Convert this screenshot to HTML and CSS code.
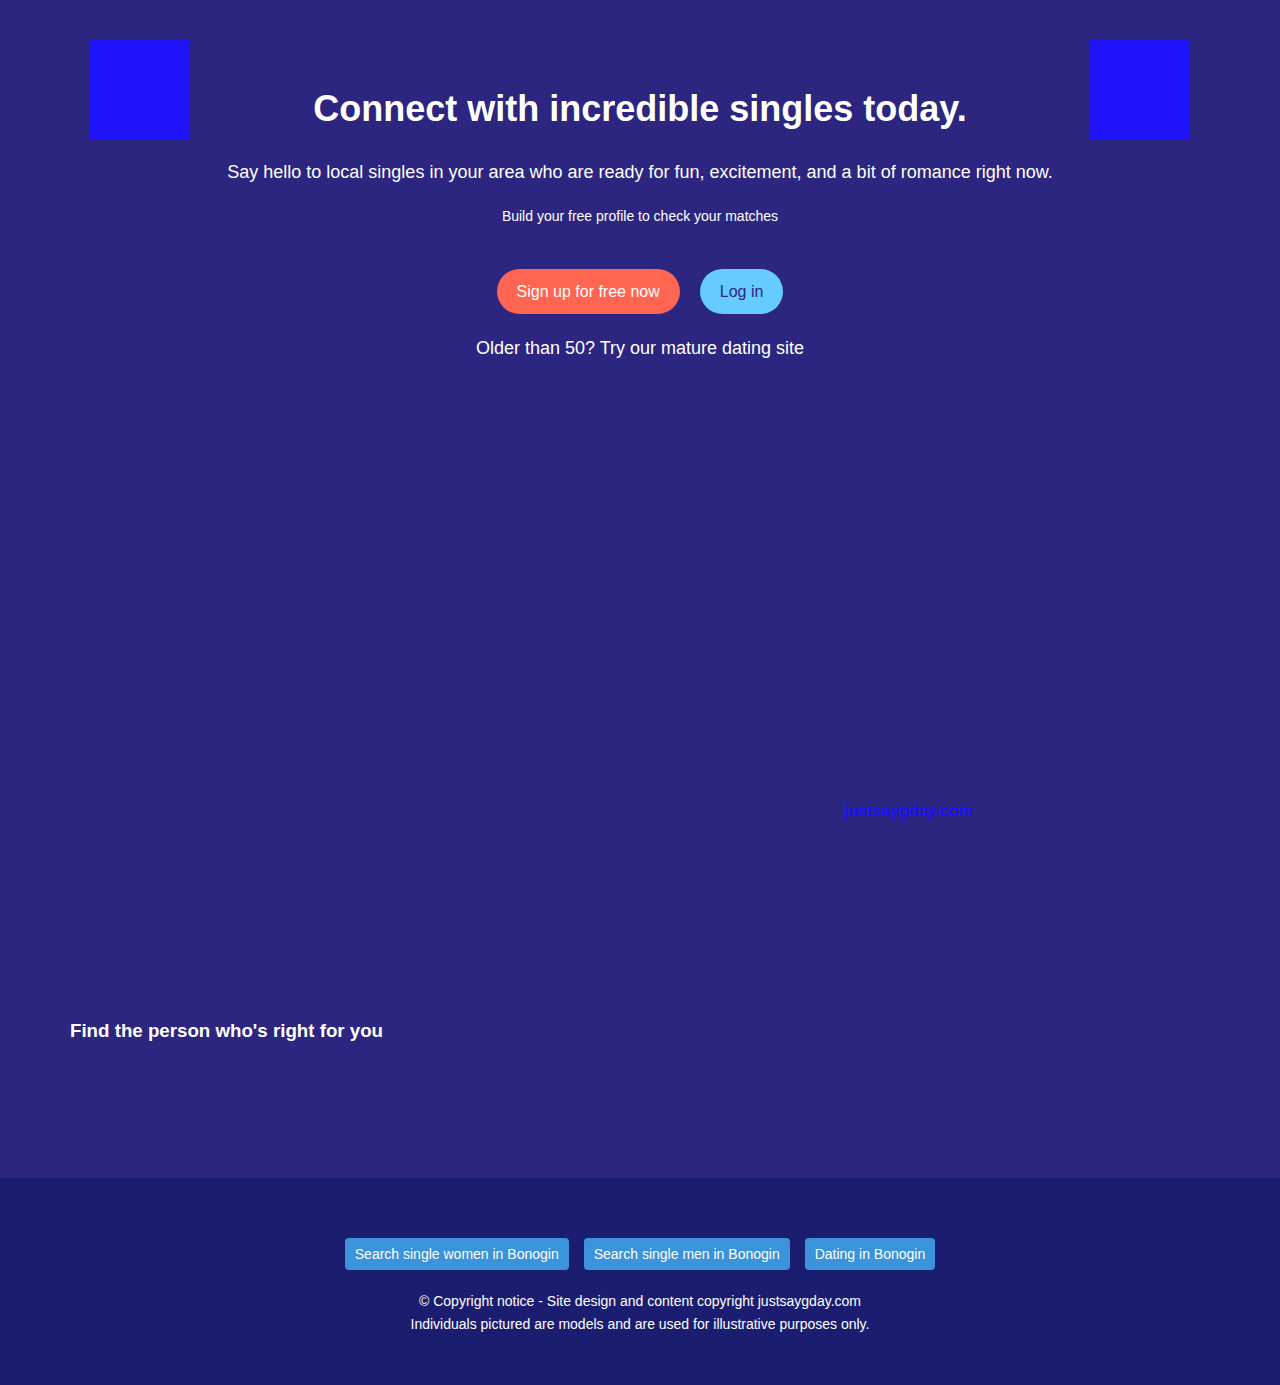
FILE: index.html
```html
<!DOCTYPE html>
<html lang="en">
<head>
<meta charset="utf-8">
<title>justsaygday.com</title>
<link rel="stylesheet" href="styles.css">
</head>
<body>
<main class="page">
  <section class="hero">
    <div class="square"></div>
    <div class="hero-body">
      <h1 class="title">Connect with incredible singles today.</h1>
      <p class="lead">Say hello to local singles in your area who are ready for fun, excitement, and a bit of romance right now.</p>
      <p class="small">Build your free profile to check your matches</p>
      <div class="actions">
        <a class="btn btn-signup" href="#">Sign up for free now</a>
        <a class="btn btn-login" href="#">Log in</a>
      </div>
      <p class="mature">Older than 50? Try our mature dating site</p>
    </div>
    <div class="square"></div>
  </section>
  <section class="showcase">
    <div class="showcase-media"></div>
    <a class="site-link" href="#">justsaygday.com</a>
  </section>
  <section class="find">
    <h3 class="find-title">Find the person who's right for you</h3>
  </section>
</main>
<footer class="footer">
  <nav class="footer-links">
    <a class="tag" href="#">Search single women in Bonogin</a>
    <a class="tag" href="#">Search single men in Bonogin</a>
    <a class="tag" href="#">Dating in Bonogin</a>
  </nav>
  <p class="copy">© Copyright notice - Site design and content copyright justsaygday.com<br>Individuals pictured are models and are used for illustrative purposes only.</p>
</footer>
</body>
</html>
```
FILE: styles.css
```css
* { box-sizing: border-box; }
html, body { margin: 0; padding: 0; }
body {
  background: #2c2680;
  color: #ffffff;
  font-family: "Liberation Sans", Arial, sans-serif;
}
.page {
  height: 1178px;
  background: #2c2680;
}
.hero {
  display: grid;
  grid-template-columns: 100px 1fr 100px;
  padding: 40px 90px 0;
}
.square {
  width: 100px;
  height: 100px;
  background: #1e13fa;
}
.hero-body {
  text-align: center;
  padding-top: 46px;
}
.title {
  margin: 0;
  font-size: 36px;
  line-height: 46px;
  font-weight: 700;
}
.lead {
  margin: 29px -60px 0;
  font-size: 18px;
  line-height: 22px;
}
.small {
  margin: 25px 0 0;
  font-size: 14px;
  line-height: 17px;
}
.actions {
  display: flex;
  justify-content: center;
  gap: 20px;
  margin-top: 44px;
}
.btn {
  display: inline-flex;
  align-items: center;
  height: 45px;
  padding: 0 20px;
  border-radius: 23px;
  font-size: 16px;
  text-decoration: none;
}
.btn-signup { background: #ff6551; color: #ffffff; }
.btn-login { background: #66ccff; color: #2c2680; }
.mature {
  margin: 23px 0 0;
  font-size: 18px;
  line-height: 22px;
}
.showcase {
  display: grid;
  grid-template-columns: 844px auto;
  height: 661px;
}
.site-link {
  align-self: start;
  justify-self: start;
  margin-top: 443px;
  color: #1a10ff;
  font-weight: 700;
  font-size: 16px;
  line-height: 18px;
  text-decoration: underline;
}
.find {
  padding: 0 70px;
}
.find-title {
  margin: 0;
  font-size: 18.72px;
  line-height: 22px;
  font-weight: 700;
}
.footer {
  background: #1b1e70;
  height: 207px;
  padding-top: 60px;
  text-align: center;
}
.footer-links {
  display: flex;
  justify-content: center;
  gap: 15px;
}
.tag {
  display: inline-flex;
  align-items: center;
  height: 32px;
  padding: 0 10px;
  background: #3b93dc;
  color: #ffffff;
  border-radius: 4px;
  font-size: 14px;
  text-decoration: none;
}
.copy {
  margin: 20px 0 0;
  font-size: 14px;
  line-height: 23px;
}
```
